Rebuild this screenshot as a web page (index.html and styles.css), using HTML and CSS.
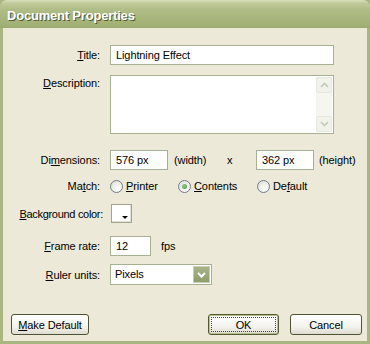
FILE: index.html
```html
<!DOCTYPE html>
<html>
<head lang="en">
    <meta charset="UTF-8">
    <title>Document Properties</title>
    <link rel="stylesheet" href="styles.css">
</head>
<body>
    <div class="window">
        <div class="titlebar">Document Properties</div>
        <div class="content">
            <div class="row r-title">
                <label class="lbl"><u>T</u>itle:</label>
                <div class="field f-title">Lightning Effect</div>
            </div>
            <div class="row r-desc">
                <label class="lbl top"><u>D</u>escription:</label>
                <div class="area">
                    <div class="scroll">
                        <span class="sbtn">
                            <svg width="9" height="6" viewBox="0 0 9 6"><path d="M1 5 L4.5 1.5 L8 5" fill="none" stroke="#c4c9b6" stroke-width="1.6"/></svg>
                        </span>
                        <span class="strack"></span>
                        <span class="sbtn">
                            <svg width="9" height="6" viewBox="0 0 9 6"><path d="M1 1 L4.5 4.5 L8 1" fill="none" stroke="#c4c9b6" stroke-width="1.6"/></svg>
                        </span>
                    </div>
                </div>
            </div>
            <div class="row r-dim">
                <label class="lbl">Di<u>m</u>ensions:</label>
                <div class="field f-dim">576 px</div>
                <span class="unit">(width)</span>
                <span class="times">x</span>
                <div class="field f-dim">362 px</div>
                <span class="unit2">(height)</span>
            </div>
            <div class="row r-match">
                <label class="lbl">Ma<u>t</u>ch:</label>
                <span class="opt o1"><span class="radio"></span><u>P</u>rinter</span>
                <span class="opt o2"><span class="radio on"></span><u>C</u>ontents</span>
                <span class="opt"><span class="radio"></span>De<u>f</u>ault</span>
            </div>
            <div class="row r-bg">
                <label class="lbl"><u>B</u>ackground color:</label>
                <span class="swatch"><span class="tri"></span></span>
            </div>
            <div class="row r-fps">
                <label class="lbl"><u>F</u>rame rate:</label>
                <div class="field f-fps">12</div>
                <span class="unit3">fps</span>
            </div>
            <div class="row r-ruler">
                <label class="lbl"><u>R</u>uler units:</label>
                <div class="select">
                    <span class="sel-text">Pixels</span>
                    <span class="sel-btn">
                        <svg width="9" height="6" viewBox="0 0 9 6"><path d="M1 1 L4.5 4.5 L8 1" fill="none" stroke="#ffffff" stroke-width="2"/></svg>
                    </span>
                </div>
            </div>
            <div class="buttons">
                <span class="btn b-default"><u>M</u>ake Default</span>
                <span class="spacer"></span>
                <span class="btn b-ok"><span class="focus">OK</span></span>
                <span class="btn b-cancel">Cancel</span>
            </div>
        </div>
    </div>
</body>
</html>
```

FILE: styles.css
```css
* {
    margin: 0;
    padding: 0;
    box-sizing: border-box;
}
body {
    background: #ece9d8;
    font-family: "Liberation Sans", Arial, sans-serif;
    font-size: 11px;
    letter-spacing: -0.1px;
    color: #000;
}
.window {
    width: 370px;
    height: 344px;
    display: flex;
    flex-direction: column;
    background: #a9b682;
}
.titlebar {
    height: 28px;
    padding: 8px 0 0 7px;
    border-radius: 7px 7px 0 0;
    background: linear-gradient(#d8e0bb 0, #c0cb9c 3px, #b0bd86 9px, #a8b67d 18px, #9fae72 27px, #98a86a 28px);
    color: #fff;
    font-weight: bold;
    font-size: 13px;
    letter-spacing: -0.2px;
    text-shadow: 1px 1px 0 #4f5a33;
}
.content {
    flex: 1;
    margin: 0 3px 3px 3px;
    background: #ece9d8;
    padding-top: 17px;
    display: flex;
    flex-direction: column;
}
.row {
    display: flex;
    align-items: center;
}
.lbl {
    width: 97px;
    margin-right: 10px;
    text-align: right;
    white-space: nowrap;
}
.lbl.top {
    align-self: flex-start;
    padding-top: 2px;
}
.field {
    height: 20px;
    background: #fff;
    border: 1px solid #a7b193;
    padding: 3px 0 0 5px;
    white-space: nowrap;
}
.f-title {
    width: 224px;
}
.r-desc {
    margin-top: 10px;
    align-items: flex-start;
}
.area {
    width: 224px;
    height: 59px;
    background: #fff;
    border: 1px solid #a7b193;
    display: flex;
    justify-content: flex-end;
    padding: 1px;
}
.scroll {
    width: 16px;
    display: flex;
    flex-direction: column;
    background: #f6f6f1;
}
.sbtn {
    height: 16px;
    display: flex;
    align-items: center;
    justify-content: center;
    background: #f1f2ea;
    border: 1px solid #e6e8dc;
    border-radius: 2px;
}
.strack {
    flex: 1;
}
.r-dim {
    margin-top: 16px;
}
.f-dim {
    width: 58px;
}
.unit {
    width: 59px;
    padding-left: 6px;
}
.times {
    width: 29px;
}
.unit2 {
    padding-left: 5px;
}
.r-match {
    margin-top: 8px;
    height: 16px;
}
.opt {
    display: flex;
    align-items: center;
}
.o1 {
    width: 68px;
}
.o2 {
    width: 79px;
}
.radio {
    width: 13px;
    height: 13px;
    border-radius: 50%;
    border: 1px solid #6f7d8e;
    background: radial-gradient(circle at 65% 70%, #ffffff 0, #f0f0ea 45%, #d4d6cc 100%);
    margin-right: 3px;
    display: flex;
    align-items: center;
    justify-content: center;
}
.radio.on::after {
    content: "";
    width: 5px;
    height: 5px;
    border-radius: 50%;
    background: radial-gradient(circle at 40% 40%, #8fd08a, #3f8f3c);
}
.r-bg {
    margin-top: 10px;
}
.r-bg .lbl {
    width: 100px;
    margin-right: 7px;
    letter-spacing: -0.3px;
}
.swatch {
    width: 21px;
    height: 19px;
    border: 1px solid #a2a492;
    background: #fff;
    position: relative;
    margin-left: 1px;
    box-shadow: inset -1px -1px 0 #e0e0d6;
}
.tri {
    position: absolute;
    right: 3px;
    bottom: 3px;
    width: 0;
    height: 0;
    border-left: 3px solid transparent;
    border-right: 3px solid transparent;
    border-top: 3px solid #000;
}
.r-fps {
    margin-top: 13px;
}
.f-fps {
    width: 41px;
}
.unit3 {
    padding-left: 10px;
}
.r-ruler {
    margin-top: 8px;
}
.select {
    width: 102px;
    height: 21px;
    background: #fff;
    border: 1px solid #a7b193;
    display: flex;
    align-items: stretch;
}
.sel-text {
    flex: 1;
    padding: 3px 0 0 4px;
}
.sel-btn {
    width: 17px;
    margin: 1px;
    background: linear-gradient(#a6b386, #8f9d6e);
    border: 1px solid #c6cdb0;
    display: flex;
    align-items: center;
    justify-content: center;
}
.buttons {
    margin-top: 29px;
    display: flex;
    padding: 0 5px 0 8px;
}
.spacer {
    flex: 1;
}
.btn {
    height: 21px;
    border: 1px solid #4f5233;
    border-radius: 3px;
    background: linear-gradient(#ffffff, #f4f3ee 60%, #dedcd0);
    display: flex;
    align-items: center;
    justify-content: center;
}
.b-default {
    width: 78px;
}
.b-ok {
    width: 71px;
    margin-right: 11px;
    border-color: #555a33;
    box-shadow: inset 0 0 0 1px #b7c08f;
    padding: 2px;
}
.focus {
    flex: 1;
    align-self: stretch;
    border: 1px dotted #444;
    display: flex;
    align-items: center;
    justify-content: center;
}
.b-cancel {
    width: 72px;
}
```
